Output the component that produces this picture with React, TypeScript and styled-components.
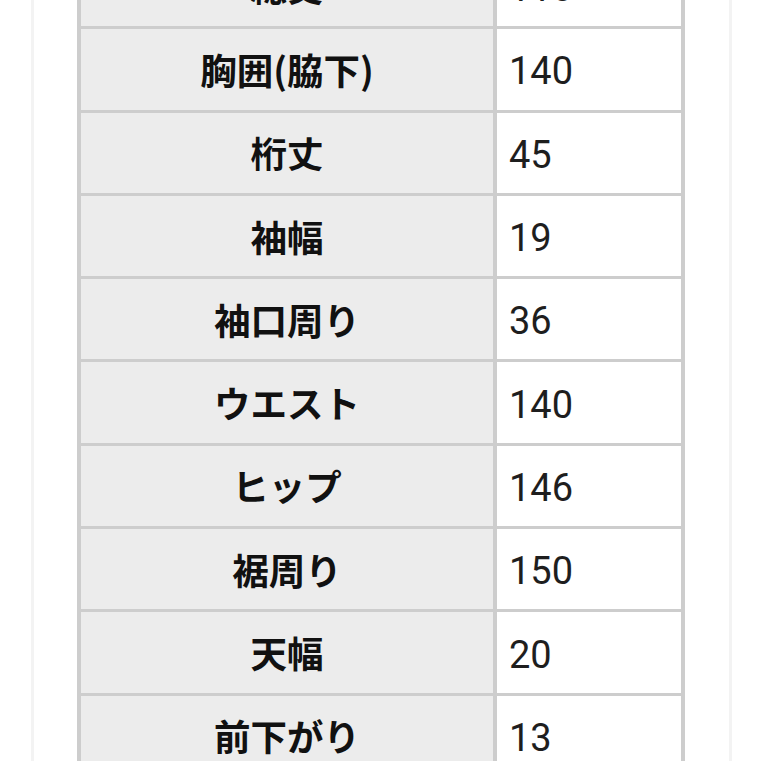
import React from "react";
import styled, { createGlobalStyle } from "styled-components";

const Global = createGlobalStyle`
  html, body {
    margin: 0;
    padding: 0;
    background: #ffffff;
    height: 761px;
    overflow: hidden;
  }
  #root { height: 761px; }
`;

const Card = styled.div`
  box-sizing: border-box;
  margin-left: 31px;
  width: 701px;
  height: 761px;
  border-left: 3px solid #f3f3f3;
  border-right: 3px solid #f3f3f3;
  background: #ffffff;
  overflow: hidden;
`;

const Table = styled.table`
  margin-top: -57px;
  margin-left: 43px;
  width: 608px;
  border-collapse: separate;
  border-spacing: 4px 3px;
  background: #cdcdcd;
  table-layout: fixed;
`;

const Head = styled.th`
  width: 412px;
  height: 80.3px;
  padding: 0;
  background: #ececec;
  color: #111111;
  font-family: "Noto Sans CJK JP", "Noto Sans", sans-serif;
  font-weight: 700;
  font-size: 36.5px;
  text-align: center;
  vertical-align: middle;
  white-space: nowrap;
`;

const Value = styled.td`
  width: 184px;
  height: 80.3px;
  padding: 4px 0 0 12px;
  box-sizing: border-box;
  background: #ffffff;
  color: #1e1e1e;
  font-family: Roboto, "Noto Sans", sans-serif;
  font-weight: 400;
  font-size: 38px;
  text-align: left;
  vertical-align: middle;
`;

const rows: [string, string][] = [
  ["総丈", "118"],
  ["胸囲(脇下)", "140"],
  ["桁丈", "45"],
  ["袖幅", "19"],
  ["袖口周り", "36"],
  ["ウエスト", "140"],
  ["ヒップ", "146"],
  ["裾周り", "150"],
  ["天幅", "20"],
  ["前下がり", "13"],
];

export default function App() {
  return (
    <>
      <Global />
      <Card>
        <Table>
          <tbody>
            {rows.map(([k, v]) => (
              <tr key={k}>
                <Head scope="row">{k}</Head>
                <Value>{v}</Value>
              </tr>
            ))}
          </tbody>
        </Table>
      </Card>
    </>
  );
}
